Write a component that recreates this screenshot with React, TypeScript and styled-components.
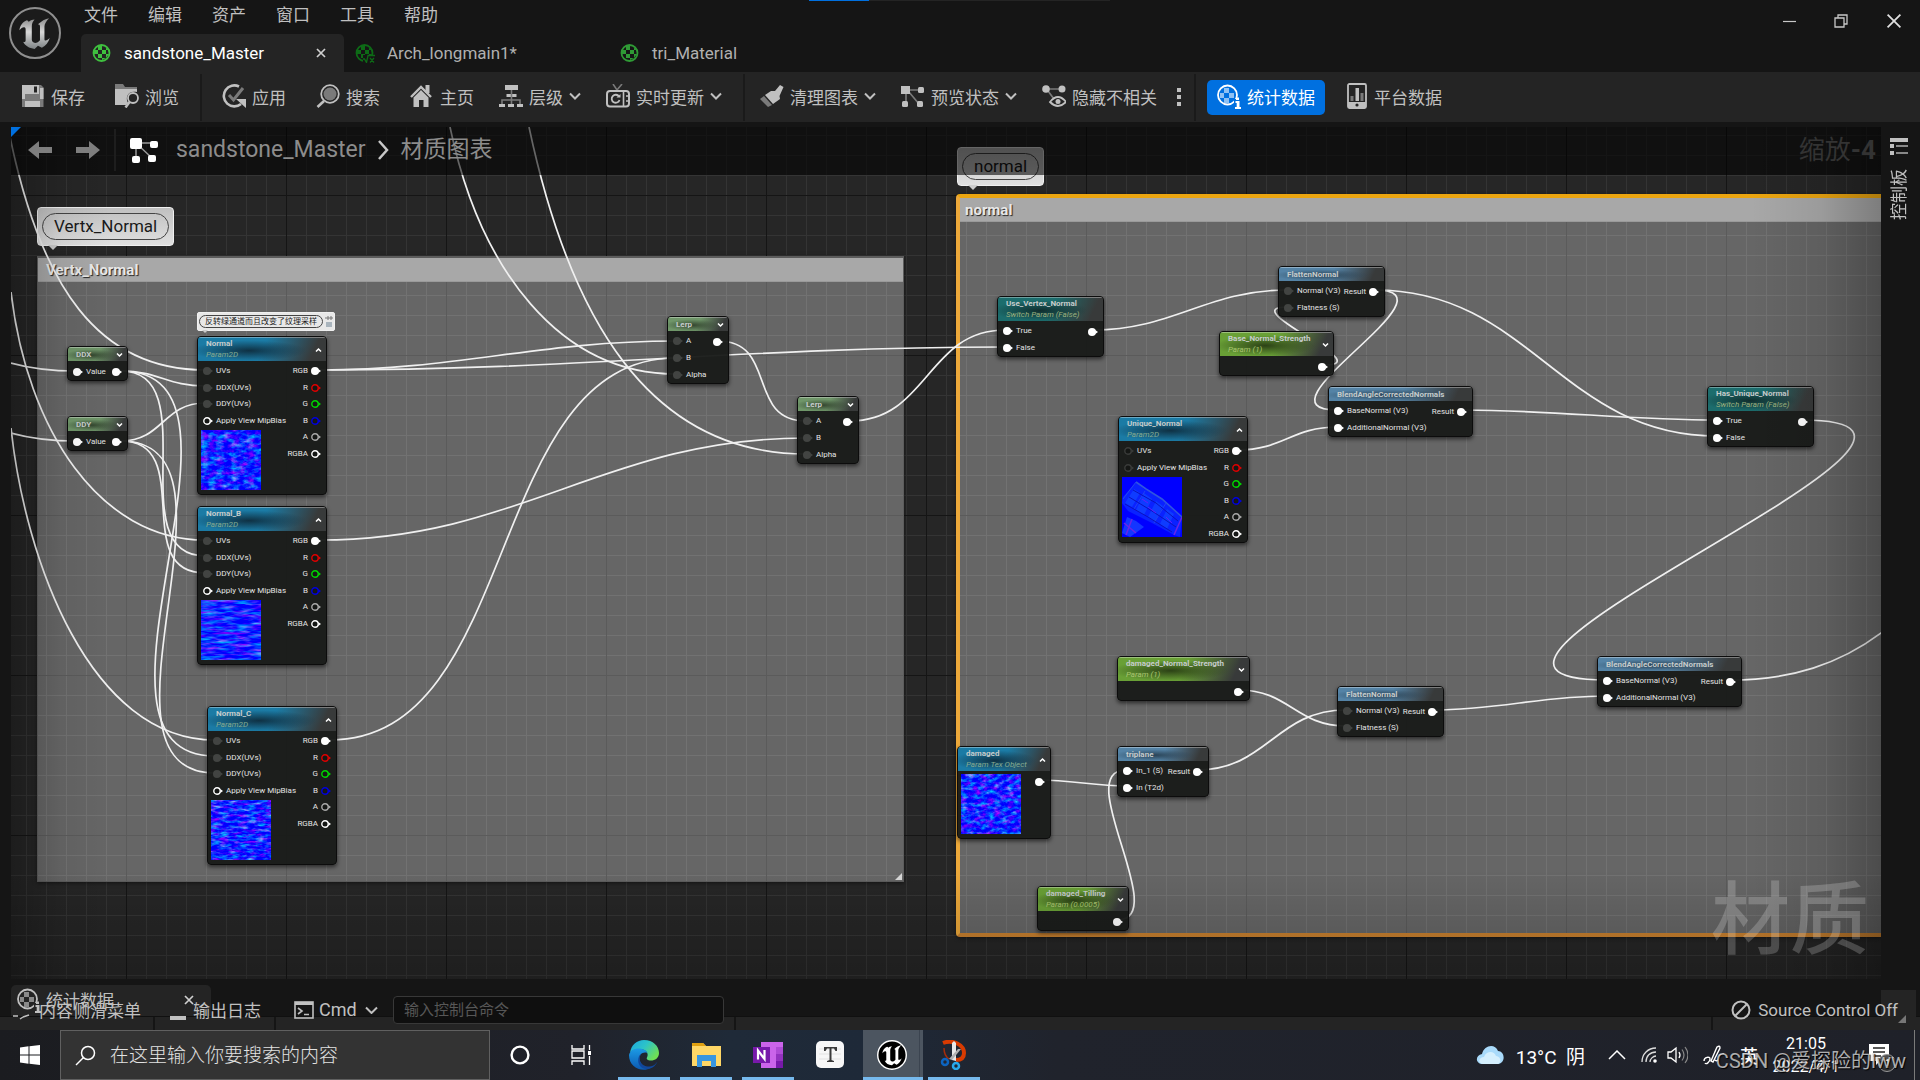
import React from "react";
import styled, { createGlobalStyle, css } from "styled-components";

const Global = createGlobalStyle`
  * { box-sizing: border-box; }
  html, body { margin: 0; background: #151515; }
  body { font-family: Roboto, "Noto Sans CJK SC", sans-serif; color: #c0c0c0; overflow: hidden; }
  button { font: inherit; color: inherit; background: none; border: 0; padding: 0; margin: 0; cursor: pointer; }
  input { font: inherit; }
  svg { display: block; flex: none; }
`;

const Page = styled.div`
  height: 100vh;
  display: flex;
  flex-direction: column;
  background: #151515;
`;

/* ---------- title area ---------- */
const TitleArea = styled.header`
  position: relative;
  height: 72px;
  flex: none;
  display: flex;
`;
const LogoBox = styled.div`
  width: 81px;
  padding: 6px 0 0 9px;
`;
const TitleMain = styled.div`
  flex: 1;
  display: flex;
  flex-direction: column;
  justify-content: space-between;
`;
const MenuBar = styled.nav`
  display: flex;
  gap: 30px;
  padding-left: 3px;
  height: 30px;
  align-items: center;
  font-size: 17px;
  line-height: 24px;
`;
const Tabs = styled.div`
  display: flex;
  height: 38px;
`;
const Tab = styled.div<{ $active?: boolean }>`
  width: ${(p) => (p.$active ? 263 : 265)}px;
  display: flex;
  align-items: center;
  padding: 0 18px 0 11px;
  border-radius: 5px 5px 0 0;
  font-size: 17px;
  background: ${(p) => (p.$active ? "#242424" : "transparent")};
  color: ${(p) => (p.$active ? "#ffffff" : "#b0b0b0")};
`;
const TabLabel = styled.button`
  flex: 1;
  display: flex;
  align-items: center;
  gap: 12px;
  text-align: left;
`;
const ProgressLine = styled.div`
  position: absolute;
  top: 0;
  left: 809px;
  width: 301px;
  height: 1px;
  background: linear-gradient(90deg, #0070e0 60px, #242424 60px);
`;
const WindowButtons = styled.div`
  display: flex;
  align-items: center;
  gap: 38px;
  height: 42px;
  padding-right: 18px;
`;

/* ---------- toolbar ---------- */
const Toolbar = styled.div`
  height: 50px;
  flex: none;
  display: flex;
  align-items: center;
  padding: 0 6px;
  background: #242424;
`;
const Tool = styled.button<{ $tight?: boolean; $on?: boolean }>`
  display: flex;
  align-items: center;
  gap: 6px;
  height: 35px;
  padding: 0 15px 2px ${(p) => (p.$tight ? 10 : 15)}px;
  font-size: 17px;
  white-space: nowrap;
  border-radius: 5px;
  color: #c0c0c0;
  ${(p) =>
    p.$on &&
    css`
      padding: 0 10px 2px;
      margin: 0 6px;
      background: #0070e0;
      color: #ffffff;
    `}
`;
const Divider = styled.div`
  width: 2px;
  height: 47px;
  margin: 0 5px 0 6px;
  background: #1a1a1a;
`;
const Dots = styled.button`
  width: 18px;
  height: 35px;
  margin-left: -2px;
  display: grid;
  place-items: center;
`;

/* ---------- work area ---------- */
const Work = styled.main`
  flex: 1;
  min-height: 0;
  display: flex;
  padding: 5px 0 0 11px;
`;
const SideBar = styled.aside`
  width: 39px;
  flex: none;
  display: flex;
  flex-direction: column;
  align-items: center;
  padding: 11px 3px 0 0;
`;
const SideTab = styled.button`
  display: flex;
  flex-direction: column;
  align-items: center;
  gap: 14px;
`;
const SideText = styled.span`
  writing-mode: vertical-rl;
  transform: rotate(180deg);
  text-orientation: sideways;
  font-size: 17px;
  line-height: 24px;
`;
const Canvas = styled.section`
  flex: 1;
  position: relative;
  overflow: hidden;
  background-color: #262626;
`;
const Grid = styled.div<{ $soft?: boolean }>`
  position: absolute;
  inset: 0;
  pointer-events: none;
  background-image: linear-gradient(90deg, ${(p) => (p.$soft ? "#5b5b5b" : "#151515")} 1px, transparent 1px),
    linear-gradient(${(p) => (p.$soft ? "#5b5b5b" : "#151515")} 1px, transparent 1px),
    linear-gradient(90deg, ${(p) => (p.$soft ? "#727272" : "#343434")} 1px, transparent 1px),
    linear-gradient(${(p) => (p.$soft ? "#727272" : "#343434")} 1px, transparent 1px);
  background-size: 160px 160px, 160px 160px, 20px 20px, 20px 20px;
`;
const Vignette = styled.div`
  position: absolute;
  inset: 0;
  pointer-events: none;
  background: linear-gradient(270deg, rgba(0, 0, 0, 0.26), rgba(0, 0, 0, 0.08) 60px, transparent 130px),
    linear-gradient(90deg, rgba(0, 0, 0, 0.24), rgba(0, 0, 0, 0.05) 50px, transparent 100px),
    linear-gradient(0deg, rgba(0, 0, 0, 0.2), transparent 110px);
`;
const CrumbBar = styled.div`
  position: absolute;
  inset: 0 0 auto 0;
  height: 48px;
  display: flex;
  align-items: center;
  padding: 0 5px 2px 17px;
  background: rgba(0, 0, 0, 0.58);
  color: #8c8c8c;
`;
const CrumbNav = styled.div`
  display: flex;
  gap: 24px;
  padding-right: 14px;
  margin-right: 14px;
  border-right: 2px solid #1e1e1e;
  height: 42px;
  align-items: center;
`;
const Crumb = styled.button<{ $first?: boolean }>`
  font-size: 23px;
  line-height: 34px;
  margin-left: ${(p) => (p.$first ? 18 : 12)}px;
  margin-right: ${(p) => (p.$first ? 11 : 0)}px;
`;
const ZoomText = styled.div`
  margin-left: auto;
  font-size: 26px;
  line-height: 34px;
  color: #333333;
`;
const Watermark = styled.div`
  position: absolute;
  right: 12px;
  bottom: 8px;
  font-size: 79px;
  line-height: 100px;
  font-weight: 500;
  color: rgba(255, 255, 255, 0.2);
`;
const Wires = styled.svg`
  position: absolute;
  inset: 0;
  width: 100%;
  height: 100%;
`;

type Box = { x: number; y: number };
/* the graph is scrolled by this amount inside its view */
const PAN = { x: -11, y: -127 };
const at = css<{ $x: number; $y: number }>`
  position: absolute;
  left: ${(p) => p.$x + PAN.x}px;
  top: ${(p) => p.$y + PAN.y}px;
`;

const Comment = styled.div<{ $x: number; $y: number; $w?: number; $h: number; $sel?: boolean }>`
  ${at}
  ${(p) => (p.$w ? `width: ${p.$w}px;` : "right: 0;")}
  height: ${(p) => p.$h}px;
  overflow: hidden;
  background: #666666;
  box-shadow: 0 1px 4px rgba(0, 0, 0, 0.5);
  ${(p) =>
    p.$sel
      ? css`
          border-style: solid;
          border-width: 4px 0 4px 4px;
          border-color: #eba510 transparent #c8802f #eca83a;
          border-radius: 4px 0 0 4px;
        `
      : css`
          border: 1px solid #5c5c5c;
          border-top-width: 2px;
        `}
`;
const CommentGrid = styled(Grid)<{ $gx: number; $gy: number }>`
  background-position: ${(p) => p.$gx}px ${(p) => p.$gy}px;
`;
const CommentTitle = styled.div<{ $pad: number }>`
  position: relative;
  height: 24px;
  padding-left: ${(p) => p.$pad}px;
  background: #a8a8a8;
  border-bottom: 1px solid #9a9a9a;
  font-size: 15px;
  font-weight: 700;
  line-height: 24px;
  color: #e8e8e8;
  text-shadow: 1px 1px 1px #222222;
`;
const Bubble = styled.div<{ $x: number; $y: number; $small?: boolean }>`
  ${at}
  display: flex;
  align-items: center;
  gap: 2px;
  padding: ${(p) => (p.$small ? "2px 1px" : "5px 4px")};
  border-radius: ${(p) => (p.$small ? 2 : 4)}px;
  border: 1px solid #f0f0f0;
  background: linear-gradient(#c0c0c0, #e0e0e0);
  color: #1a1a1a;
  &::after {
    content: "";
    position: absolute;
    top: 100%;
    left: ${(p) => (p.$small ? 4 : 10)}px;
    border: ${(p) => (p.$small ? 3 : 5)}px solid transparent;
    border-top-color: #cccccc;
  }
  ${(p) => p.$small && "background: #e8e8e8;"}
`;
const BubbleText = styled.span<{ $small?: boolean }>`
  border: 1px solid #444444;
  border-radius: 14px;
  padding: 0 ${(p) => (p.$small ? 5 : 11)}px;
  font-size: ${(p) => (p.$small ? 8 : 17)}px;
  line-height: ${(p) => (p.$small ? 11 : 25)}px;
  white-space: nowrap;
`;

/* ---------- nodes ---------- */
type Tone = "math" | "tex" | "param" | "switch" | "func";
const tones: Record<Tone, { light: string; dark: string; sub: string }> = {
  math: { light: "#6f9669", dark: "#33452f", sub: "#8f9c6c" },
  tex: { light: "#1b7ba5", dark: "#0f3144", sub: "#86ab90" },
  param: { light: "#69a036", dark: "#2c4216", sub: "#a9c670" },
  switch: { light: "#1c6d6d", dark: "#102e2e", sub: "#9bb07e" },
  func: { light: "#5483a6", dark: "#2a4356", sub: "#90a080" },
};
const NodeCard = styled.article<{ $x: number; $y: number; $w: number }>`
  ${at}
  width: ${(p) => p.$w}px;
  border-radius: 4px;
  border: 1px solid #0c0c0c;
  background: rgba(25, 27, 25, 0.96);
  box-shadow: 0 2px 4px rgba(0, 0, 0, 0.6);
  overflow: hidden;
  font-size: 8px;
  line-height: 10px;
  color: #e4e4e4;
`;
const NodeHead = styled.div<{ $tone: Tone; $two: boolean }>`
  height: ${(p) => (p.$two ? 24 : 14)}px;
  display: flex;
  align-items: center;
  justify-content: space-between;
  padding: 0 4px 0 8px;
  border-top: 1px solid rgba(255, 255, 255, 0.35);
  background: radial-gradient(ellipse 45% 45% at 40% 55%, ${(p) => tones[p.$tone].dark}, transparent),
    linear-gradient(115deg, ${(p) => tones[p.$tone].light} 50%, #383a3a 88%);
`;
const NodeTitle = styled.div`
  font-weight: 700;
  color: #c6cccc;
  white-space: nowrap;
`;
const NodeSub = styled.div<{ $tone: Tone }>`
  font-weight: 400;
  font-style: italic;
  line-height: 11px;
  color: ${(p) => tones[p.$tone].sub};
`;
const NodeBody = styled.div`
  display: flex;
  justify-content: space-between;
  padding: 2px 5px 0 5px;
`;
const PinColumn = styled.div<{ $n: number; $out?: boolean }>`
  flex: none;
  white-space: nowrap;
  & > ul {
    list-style: none;
    margin: 0;
    padding: 0;
    display: grid;
    grid-auto-rows: 1fr;
    justify-items: ${(p) => (p.$out ? "end" : "start")};
    height: ${(p) => Math.round(p.$n * 16.5)}px;
  }
`;
const PinRow = styled.li`
  display: flex;
  align-items: center;
  gap: 3px;
`;
const TextureSvg = styled.svg`
  margin: 1px 0 4px -2px;
`;

type PinDef = [label: string, kind: string];
const Pin = ({ kind }: { kind: string }) => {
  const ring = kind.startsWith("o:");
  const color = ring ? kind.slice(2) : kind;
  return (
    <svg width="10" height="8" viewBox="0 0 10 8">
      <circle cx="4" cy="4" r={ring ? 3.2 : 4} fill={ring ? "#151715" : color} stroke={ring ? color : "none"} strokeWidth="1.4" />
      <path d="M7.3 2 L10 4 L7.3 6Z" fill={color} />
    </svg>
  );
};
const Caret = ({ up }: { up?: boolean }) => (
  <svg width="7" height="6" viewBox="0 0 7 6" fill="none" stroke="#fff" strokeWidth="1.5">
    <path d={up ? "M1 4.5 L3.5 2 L6 4.5" : "M1 1.5 L3.5 4 L6 1.5"} />
  </svg>
);

const Texture = ({ kind }: { kind: string }) => (
  <TextureSvg width="60" height="60" viewBox="0 0 60 60">
    <rect width="60" height="60" fill="#0000ff" />
    {kind === "arch" ? (
      <g>
        <path d="M14 5 L22 12 L40 22 L50 32 L60 40 L58 60 L52 58 L30 46 L6 34 L0 26 L1 20Z" fill="#0a22ff" />
        <path d="M12 12 L18 16 L10 30 L3 26Z M22 16 L30 22 L22 38 L14 33Z M34 24 L41 29 L33 45 L26 40Z M45 32 L52 37 L45 52 L38 47Z" fill="#0f3cff" />
        <g stroke="#2f55e0" strokeWidth="1" fill="none">
          <path d="M14 5 L24 12 L40 22 L60 40" strokeWidth="1.6" />
          <path d="M14 5 L1 22 M23 14 L12 32 M44 26 L32 46" stroke="#2244f0" />
          <path d="M11 13 L34 26 L56 44 M7 20 L30 34 L54 50 M3 27 L26 40 L50 55" stroke="#0a12c0" />
          <path d="M26 30 L34 36 M44 40 L50 46 M20 22 L26 26" stroke="#5a20ff" />
        </g>
        <path d="M5 40 L14 44 L22 50 L8 60 L0 56Z" fill="#1436ff" />
        <path d="M2 46 L14 56 M10 42 L4 58 M52 58 L60 40" stroke="#6a25e8" strokeWidth="1.5" />
      </g>
    ) : (
      <rect width="60" height="60" filter={`url(#rock-${kind})`} />
    )}
  </TextureSvg>
);
const rocks: [string, string, number][] = [
  ["a", "0.13 0.22", 3],
  ["b", "0.06 0.34", 8],
  ["c", "0.11 0.34", 15],
  ["d", "0.15 0.24", 22],
];

type NodeDef = Box & { w: number; tone: Tone; title: string; sub?: string; caret?: "up" | "down"; ins: PinDef[]; outs: PinDef[]; tex?: string };
const W = "#ffffff";
const D = "#424442";
const rgba: PinDef[] = [["RGB", W], ["R", "o:#e00000"], ["G", "o:#00d800"], ["B", "o:#0000e0"], ["A", "o:#a8a8a8"], ["RGBA", "o:#ffffff"]];
const texIns: PinDef[] = [["UVs", D], ["DDX(UVs)", D], ["DDY(UVs)", D], ["Apply View MipBias", "o:#ffffff"]];
const lerpIns: PinDef[] = [["A", D], ["B", D], ["Alpha", D]];
const flatIns: PinDef[] = [["Normal (V3)", D], ["Flatness (S)", D]];
const blendIns: PinDef[] = [["BaseNormal (V3)", W], ["AdditionalNormal (V3)", W]];
const boolIns: PinDef[] = [["True", W], ["False", W]];
const one: PinDef[] = [["", W]];
const result: PinDef[] = [["Result", W]];

const nodes: NodeDef[] = [
  { x: 67, y: 346, w: 61, tone: "math", title: "DDX", caret: "down", ins: [["Value", W]], outs: one },
  { x: 67, y: 416, w: 61, tone: "math", title: "DDY", caret: "down", ins: [["Value", W]], outs: one },
  { x: 197, y: 336, w: 130, tone: "tex", title: "Normal", sub: "Param2D", caret: "up", ins: texIns, outs: rgba, tex: "a" },
  { x: 197, y: 506, w: 130, tone: "tex", title: "Normal_B", sub: "Param2D", caret: "up", ins: texIns, outs: rgba, tex: "b" },
  { x: 207, y: 706, w: 130, tone: "tex", title: "Normal_C", sub: "Param2D", caret: "up", ins: texIns, outs: rgba, tex: "c" },
  { x: 667, y: 316, w: 62, tone: "math", title: "Lerp", caret: "down", ins: lerpIns, outs: one },
  { x: 797, y: 396, w: 62, tone: "math", title: "Lerp", caret: "down", ins: lerpIns, outs: one },
  { x: 997, y: 296, w: 107, tone: "switch", title: "Use_Vertex_Normal", sub: "Switch Param (False)", ins: boolIns, outs: one },
  { x: 1278, y: 266, w: 107, tone: "func", title: "FlattenNormal", ins: flatIns, outs: result },
  { x: 1219, y: 331, w: 115, tone: "param", title: "Base_Normal_Strength", sub: "Param (1)", caret: "down", ins: [], outs: one },
  { x: 1328, y: 386, w: 145, tone: "func", title: "BlendAngleCorrectedNormals", ins: blendIns, outs: result },
  { x: 1118, y: 416, w: 130, tone: "tex", title: "Unique_Normal", sub: "Param2D", caret: "up", ins: [["UVs", "o:#3a3c3a"], ["Apply View MipBias", "o:#3a3c3a"]], outs: rgba, tex: "arch" },
  { x: 1117, y: 656, w: 133, tone: "param", title: "damaged_Normal_Strength", sub: "Param (1)", caret: "down", ins: [], outs: one },
  { x: 1337, y: 686, w: 107, tone: "func", title: "FlattenNormal", ins: flatIns, outs: result },
  { x: 957, y: 746, w: 94, tone: "tex", title: "damaged", sub: "Param Tex Object", caret: "up", ins: [], outs: one, tex: "d" },
  { x: 1117, y: 746, w: 92, tone: "func", title: "triplane", ins: [["In_1 (S)", W], ["In (T2d)", W]], outs: result },
  { x: 1037, y: 886, w: 92, tone: "param", title: "damaged_Tilling", sub: "Param (0.0005)", caret: "down", ins: [], outs: one },
  { x: 1707, y: 386, w: 107, tone: "switch", title: "Has_Unique_Normal", sub: "Switch Param (False)", ins: boolIns, outs: one },
  { x: 1597, y: 656, w: 145, tone: "func", title: "BlendAngleCorrectedNormals", ins: blendIns, outs: result },
];

const GraphNode = ({ n }: { n: NodeDef }) => (
  <NodeCard $x={n.x} $y={n.y} $w={n.w}>
    <NodeHead $tone={n.tone} $two={!!n.sub}>
      <div>
        <NodeTitle>{n.title}</NodeTitle>
        {n.sub && <NodeSub $tone={n.tone}>{n.sub}</NodeSub>}
      </div>
      {n.caret && (
        <button aria-label={n.caret === "up" ? "collapse" : "expand"}>
          <Caret up={n.caret === "up"} />
        </button>
      )}
    </NodeHead>
    <NodeBody>
      <PinColumn $n={n.ins.length}>
        {n.ins.length > 0 && (
          <ul>
            {n.ins.map(([label, kind]) => (
              <PinRow key={label}>
                <Pin kind={kind} />
                {label}
              </PinRow>
            ))}
          </ul>
        )}
        {n.tex && <Texture kind={n.tex} />}
      </PinColumn>
      <PinColumn $n={n.outs.length} $out>
        <ul>
          {n.outs.map(([label, kind]) => (
            <PinRow key={label}>
              {label}
              <Pin kind={kind} />
            </PinRow>
          ))}
        </ul>
      </PinColumn>
    </NodeBody>
  </NodeCard>
);

/* x1, y1, x2, y2, tangent length */
const links: [number, number, number, number, number][] = [
  [121, 371, 205, 386, 38],
  [121, 371, 205, 556, 86],
  [121, 371, 215, 756, 158],
  [121, 441, 205, 403, 42],
  [121, 441, 205, 573, 76],
  [121, 441, 215, 773, 139],
  [320, 370, 676, 341, 140],
  [320, 370, 1005, 347, 260],
  [320, 540, 806, 438, 200],
  [330, 740, 676, 358, 192],
  [718, 341, 806, 421, 60],
  [850, 421, 1005, 330, 78],
  [1093, 330, 1287, 290, 80],
  [1375, 290, 1717, 436, 155],
  [1375, 290, 1337, 410, 90],
  [1463, 410, 1717, 420, 90],
  [1238, 450, 1337, 427, 45],
  [1325, 365, 1287, 307, 54],
  [1802, 420, 1606, 680, 240],
  [1433, 710, 1606, 696, 65],
  [1239, 690, 1346, 726, 50],
  [1197, 770, 1346, 710, 70],
  [1040, 780, 1126, 786, 30],
  [1117, 920, 1126, 770, 56],
];
const strays = [
  "M8 127 C40 290 100 370 205 370",
  "M11 292 C27 430 100 540 205 540",
  "M11 428 C25 560 90 740 215 740",
  "M11 363 Q40 371 76 371",
  "M11 433 Q40 441 76 441",
  "M450 127 C480 270 560 374 676 374",
  "M529 127 C570 320 650 454 806 454",
  "M1730 680 C1790 680 1840 665 1885 630",
];

/* ---------- icons ---------- */
const G = "#c0c0c0";
const M = "#7a7a7a";
const Svg = ({ w = 24, h = 24, box, children }: { w?: number; h?: number; box?: string; children: React.ReactNode }) => (
  <svg width={w} height={h} viewBox={box || `0 0 ${w} ${h}`} fill="none" aria-hidden="true">
    {children}
  </svg>
);
const Chevron = () => (
  <Svg w={12} h={8}>
    <path d="M1 1.5 L6 6.5 L11 1.5" stroke={G} strokeWidth="2" />
  </Svg>
);
const U_PATH =
  "M13 10.5 C9.5 12 7 15 6.5 19.5 C8 17.5 9.5 16.5 10.8 16.8 C11.8 17 12 17.8 12 19 L12 28.5 C12 30 11 30.5 9.8 30 C11.5 33.5 15 36 20 36.5 L23 33.5 L26.5 35.5 C30 33.5 32.5 30.5 33.5 26.5 C31.8 28.3 30 29.3 29 28.5 L28.8 28 L28.8 16 C28.8 13.5 30.5 11 33 8.5 C29.5 9 26 11.2 23 14 C24.2 14 24.8 14.6 24.8 16 L24.8 28.5 C23.8 29.8 22 31 20.5 31 C18.5 31 17.5 29.5 17.5 28 L17.5 16 C17.5 13.2 18.5 11.5 20 9.8 C17.8 10 15.5 10.8 14.8 12 C14.5 11.2 13.8 10.7 13 10.5Z";
const UnrealLogo = () => (
  <svg width="52" height="54" viewBox="0 0 52 54" fill="none">
    <defs>
      <linearGradient id="steel" x1="0" y1="0" x2="0" y2="1">
        <stop offset="0" stopColor="#8a8a8a" />
        <stop offset=".45" stopColor="#d8d8d8" />
        <stop offset="1" stopColor="#7d8284" />
      </linearGradient>
    </defs>
    <circle cx="26" cy="27" r="25" stroke="#8f8f8f" strokeWidth="2" fill="#1b1b1b" />
    <path d={U_PATH} fill="url(#steel)" transform="translate(3.2 2.8) scale(1.12 1.1)" />
  </svg>
);
const Ball = ({ color, fx }: { color: string; fx?: boolean }) => (
  <Svg w={20} h={20}>
    <circle cx="9.5" cy="10" r="8" stroke={color} strokeWidth="1.8" />
    <path d="M6 3h4v4H6z M2 7h4v4H2z M10 7h4v4h-4z M6 11h4v4H6z M14 4.5l2.5 2.500H14z M14 11h3l-3 4z M10 15h4l-4 2z" fill={color} />
    {fx && (
      <>
        <path d="M8 12h12v8H8z" fill="#151515" />
        <path d="M8 16l1.5 0 2 3.5 1.5-7h7M15 15l4 4.5M19 15l-4 4.5" stroke={color} strokeWidth="1.3" />
      </>
    )}
  </Svg>
);
const StatsBall = ({ c, blue }: { c: string; blue?: boolean }) => (
  <Svg w={24} h={26}>
    <circle cx="10.5" cy="12" r="9.5" stroke={c} strokeWidth="1.8" />
    <path d="M7 5h5v5H7z M3 10h4v5H3z M12 10h5v5h-5z M7 15h5v5H7z" fill={blue ? "#8fc1f3" : "#8a8a8a"} />
    <path d="M17 16h7v10h-7z" fill={blue ? "#0070e0" : "#242424"} />
    <path d="M18.500 18h4v6h1.500v2h-6v-2h1.700v-4h-1.200z M19 14.500h3V17h-3z" fill={c} />
  </Svg>
);
const I = {
  save: (
    <Svg>
      <path d="M1 1h19l2.500 2.500V23H1z" fill={M} />
      <path d="M4 1h14v9H4z" fill={G} />
      <path d="M13 2.500h3v6h-3z" fill="#242424" />
      <path d="M4 17h15v6H4zM1 1h3v14H1zM19 4h3.500v11H19z" fill={G} />
    </Svg>
  ),
  browse: (
    <Svg>
      <path d="M0 0h8l2 3h12v4H0z" fill={M} />
      <path d="M0 5h22v3c-9-2-12 5-9 11l-2 2H0z" fill={G} />
      <circle cx="18" cy="14" r="5" stroke={G} strokeWidth="1.8" fill="#242424" />
      <path d="M14.500 18 L10.500 23.500" stroke={G} strokeWidth="2.500" />
    </Svg>
  ),
  apply: (
    <Svg>
      <path d="M17 2.500 A10.500 10.500 0 1 0 19 20" stroke={G} strokeWidth="2.600" />
      <path d="M7 11l4.500 5L21 4" stroke={M} strokeWidth="3" />
      <path d="M14 15h10v9z" fill={G} />
    </Svg>
  ),
  search: (
    <Svg>
      <circle cx="14" cy="10" r="8.800" stroke={G} strokeWidth="1.800" />
      <circle cx="14" cy="10" r="6.500" fill={M} />
      <path d="M8 17 L1.500 23" stroke={G} strokeWidth="2.600" />
    </Svg>
  ),
  home: (
    <Svg>
      <path d="M15.500 1h4v8h-4z" fill={G} />
      <path d="M1 13 L11 3 L21 13" stroke={G} strokeWidth="2.400" />
      <path d="M3.500 13.500 L11 6 L18.500 13.500V23h-5v-7h-4.500v7H3.500z" fill={G} />
    </Svg>
  ),
  tree: (
    <Svg>
      <path d="M6 1h13v5H6z M0 20h6v3H0z M9 20h6v3H9z M18 20h6v3h-6z M7.500 10h10v3h-10z" fill={G} />
      <path d="M12.500 6v14M3 20v-4h18v4" stroke={M} strokeWidth="1.600" />
    </Svg>
  ),
  live: (
    <Svg>
      <path d="M7 0l4 6 5-6" stroke={M} strokeWidth="1.600" />
      <rect x="1" y="7" width="22" height="15.500" rx="3" stroke={G} strokeWidth="2" />
      <path d="M17.500 7v15.500M20 12h2M20 17h2" stroke={G} strokeWidth="1.600" />
      <path d="M13 12.500 a4 4 0 1 0 .5 3.500" stroke={G} strokeWidth="1.800" />
      <path d="M10.500 13.500h4v-3.500z" fill={G} />
    </Svg>
  ),
  clean: (
    <Svg>
      <path d="M20 1l3.500 2-4 9 .5 3-7 5-8-9 6-4h4z" fill={G} />
      <path d="M4 12l8 9-4 2L0 15z" fill={M} />
    </Svg>
  ),
  nodes: (
    <Svg>
      <path d="M6 6h12M8 8l10 12M5 8v12" stroke={M} strokeWidth="1.600" />
      <path d="M0 2h9v8H0z" fill={G} />
      <rect x="17" y="3" width="6" height="6" rx="1.500" fill={G} />
      <rect x="16" y="17" width="6" height="6" rx="1.500" fill={G} />
      <rect x="1" y="17" width="6" height="6" rx="1.500" fill={G} />
    </Svg>
  ),
  hide: (
    <Svg>
      <path d="M5 5h14M6 7l6 8" stroke={M} strokeWidth="1.600" />
      <circle cx="4" cy="5" r="3.800" fill={G} />
      <circle cx="20" cy="5" r="3.500" fill={G} />
      <path d="M8 18 Q16 8 24 18 Q16 26 8 18Z" stroke={G} strokeWidth="1.800" fill="#242424" />
      <circle cx="16" cy="17.500" r="2.500" fill={G} />
    </Svg>
  ),
  platform: (
    <Svg w={22} h={26}>
      <rect x="2" y="1" width="18" height="24" rx="1.500" stroke={G} strokeWidth="1.800" />
      <path d="M2 19h18v6H2z" fill={G} />
      <path d="M4.500 13h3v5h-3zM14.500 10h3v8h-3z" fill={M} />
      <path d="M9.500 5h3.500v13H9.500z" fill={G} />
      <circle cx="11" cy="22" r="1.600" fill="#242424" />
    </Svg>
  ),
};

/* ---------- status area ---------- */
const Status = styled.footer`
  position: relative;
  height: 51px;
  flex: none;
  background: linear-gradient(#151515 37px, #101010 37px, #101010 38px, #242424 38px);
`;
const StatsTab = styled.div`
  position: absolute;
  left: 11px;
  top: 6px;
  width: 200px;
  height: 31px;
  padding: 0 17px 2px 6px;
  display: flex;
  align-items: center;
  justify-content: space-between;
  border-radius: 5px 5px 0 0;
  background: #242424;
  font-size: 17px;
`;
const StatsLabel = styled.button`
  display: flex;
  align-items: center;
  gap: 5px;
`;
const StatusRow = styled.div`
  position: relative;
  height: 51px;
  display: flex;
  align-items: center;
  padding: 10px 22px 0 10px;
  font-size: 17px;
`;
const StatusItem = styled.button<{ $w: number; $gap?: number }>`
  width: ${(p) => p.$w}px;
  flex: none;
  display: flex;
  align-items: center;
  gap: ${(p) => p.$gap ?? 6}px;
  white-space: nowrap;
`;
const Cmd = styled.span`
  font-size: 18px;
`;
const Console = styled.input`
  width: 331px;
  height: 28px;
  padding: 0 10px;
  border: 1px solid #383838;
  border-radius: 4px;
  background: #0f0f0f;
  color: #c0c0c0;
  font-size: 15px;
  &::placeholder { color: #575757; }
`;
const SourceControl = styled.button`
  margin-left: auto;
  display: flex;
  align-items: center;
  gap: 7px;
  font-size: 17px;
`;
const Corner = styled.div`
  position: absolute;
  right: 4px;
  top: 11px;
  width: 35px;
  height: 40px;
  padding: 25px 10px 0 0;
  display: flex;
  justify-content: flex-end;
  background: #242424;
`;
const Notch = styled.div<{ $x: number }>`
  position: absolute;
  left: ${(p) => p.$x}px;
  bottom: 0;
  width: 2px;
  height: 13px;
  background: #151515;
`;

/* ---------- taskbar ---------- */
const Taskbar = styled.nav`
  height: 50px;
  flex: none;
  display: flex;
  position: relative;
  background: linear-gradient(90deg, #1b1c20, #20222a 30%, #1f2a38 38%, #1e2938 45%, #20232c 55%, #1f2129);
`;
const Start = styled.button`
  width: 60px;
  display: grid;
  place-items: center;
`;
const SearchBox = styled.label`
  width: 430px;
  margin-right: -1px;
  display: flex;
  align-items: center;
  gap: 12px;
  padding-left: 14px;
  background: #333333;
  border: 1px solid #606060;
`;
const SearchInput = styled.input`
  flex: 1;
  min-width: 0;
  border: 0;
  outline: 0;
  background: none;
  font-size: 19px;
  font-weight: 300;
  color: #fff;
  &::placeholder { color: #e2e2e2; opacity: 1; }
`;
const TaskApp = styled.button<{ $run?: boolean; $on?: boolean }>`
  width: 62px;
  height: 50px;
  display: grid;
  place-items: center;
  position: relative;
  background: ${(p) => (p.$on ? "linear-gradient(90deg, transparent 2px, #4c5560 2px, #4c5560 58px, #2b3340 58px, #4c5560 59px)" : "none")};
  &::after {
    content: "";
    display: ${(p) => (p.$run ? "block" : "none")};
    position: absolute;
    left: ${(p) => (p.$on ? 2 : 5)}px;
    right: ${(p) => (p.$on ? 0 : 5)}px;
    bottom: 0;
    height: 3px;
    background: #76b9ed;
  }
`;
const Tray = styled.div`
  margin-left: auto;
  display: flex;
  align-items: center;
  gap: 15px;
  padding-right: 25px;
  color: #ffffff;
`;
const Weather = styled.button`
  display: flex;
  align-items: center;
  gap: 11px;
  font-size: 19px;
  margin-right: 8px;
`;
const Sound = styled.button`
  margin-left: -5px;
`;
const Lang = styled.button`
  font-size: 18px;
  font-weight: 500;
`;
const Clock = styled.button`
  width: 76px;
  margin: 0 6px 0 -5px;
  font-size: 16px;
  line-height: 23px;
  text-align: center;
`;
const Csdn = styled.div`
  position: absolute;
  right: 14px;
  bottom: 4px;
  font-size: 20px;
  line-height: 30px;
  color: rgba(225, 225, 225, 0.75);
  text-shadow: 1px 1px 1px #000;
  pointer-events: none;
`;
const ShowDesktop = styled.div`
  position: absolute;
  right: 5px;
  top: 0;
  bottom: 0;
  width: 1px;
  background: #7a7a7a;
`;

const CloseX = ({ s = 10, c = "#d0d0d0" }) => (
  <Svg w={s} h={s} box="0 0 10 10">
    <path d="M1 1l8 8M9 1L1 9" stroke={c} strokeWidth={s > 12 ? "1.1" : "1.7"} />
  </Svg>
);

export default function App() {
  return (
    <Page>
      <Global />
      <TitleArea>
        <ProgressLine />
        <LogoBox>
          <UnrealLogo />
        </LogoBox>
        <TitleMain>
          <MenuBar>
            {["文件", "编辑", "资产", "窗口", "工具", "帮助"].map((m) => (
              <button key={m}>{m}</button>
            ))}
          </MenuBar>
          <Tabs>
            <Tab $active>
              <TabLabel><Ball color="#3fc13f" />sandstone_Master</TabLabel>
              <button aria-label="close tab"><CloseX /></button>
            </Tab>
            <Tab>
              <TabLabel><Ball color="#0d6b16" fx />Arch_longmain1*</TabLabel>
            </Tab>
            <Tab>
              <TabLabel><Ball color="#2f9a35" />tri_Material</TabLabel>
            </Tab>
          </Tabs>
        </TitleMain>
        <WindowButtons>
          <button aria-label="minimize"><Svg w={14} h={14}><path d="M1 7.500h13" stroke="#c8c8c8" strokeWidth="1.200" /></Svg></button>
          <button aria-label="restore"><Svg w={14} h={14}><path d="M1 4h9v9H1z M4 4V1h9v9h-3" stroke="#c8c8c8" strokeWidth="1.300" /></Svg></button>
          <button aria-label="close"><CloseX s={16} c="#e0e0e0" /></button>
        </WindowButtons>
      </TitleArea>

      <Toolbar>
        <Tool>{I.save}保存</Tool>
        <Tool>{I.browse}浏览</Tool>
        <Divider />
        <Tool>{I.apply}应用</Tool>
        <Tool>{I.search}搜索</Tool>
        <Tool>{I.home}主页</Tool>
        <Tool $tight>{I.tree}层级<Chevron /></Tool>
        <Tool $tight>{I.live}实时更新<Chevron /></Tool>
        <Divider />
        <Tool $tight>{I.clean}清理图表<Chevron /></Tool>
        <Tool $tight>{I.nodes}预览状态<Chevron /></Tool>
        <Tool $tight>{I.hide}隐藏不相关</Tool>
        <Dots aria-label="more">
          <Svg w={4} h={18}>
            <path d="M0 0h4v4H0zM0 7h4v4H0zM0 14h4v4H0z" fill={G} />
          </Svg>
        </Dots>
        <Divider />
        <Tool $on><StatsBall c="#fff" blue />统计数据</Tool>
        <Tool>{I.platform}平台数据</Tool>
      </Toolbar>

      <Work>
        <Canvas>
          <Grid style={{ backgroundPosition: `${126 + PAN.x}px ${195 + PAN.y}px` }} />
          <Comment $x={37} $y={256} $w={867} $h={626}>
            <CommentGrid $soft $gx={88} $gy={97} />
            <CommentTitle $pad={8}>Vertx_Normal</CommentTitle>
          </Comment>
          <Comment $x={956} $y={194} $h={743} $sel>
            <CommentGrid $soft $gx={126} $gy={157} />
            <CommentTitle $pad={5}>normal</CommentTitle>
          </Comment>
          <Bubble $x={37} $y={207}><BubbleText>Vertx_Normal</BubbleText></Bubble>
          <Bubble $x={957} $y={147}><BubbleText>normal</BubbleText></Bubble>
          <Wires>
            <defs>
              {rocks.map(([id, f, seed]) => (
                <filter key={id} id={`rock-${id}`} x="0" y="0" width="1" height="1" colorInterpolationFilters="sRGB">
                  <feTurbulence type="fractalNoise" baseFrequency={f} numOctaves="3" seed={seed} />
                  <feColorMatrix values="1.5 0 0 0 -0.68  0 1.6 0 0 -0.66  0 0 0 0 1  0 0 0 0 1" />
                </filter>
              ))}
            </defs>
            <g transform={`translate(${PAN.x} ${PAN.y})`} fill="none" stroke="#f0f0f0" strokeWidth="1.700">
              {links.map(([a, b, c, d, t], i) => (
                <path key={i} d={`M${a} ${b} C${a + t} ${b} ${c - t} ${d} ${c} ${d}`} />
              ))}
              {strays.map((d) => (
                <path key={d} d={d} />
              ))}
            </g>
          </Wires>
          <Bubble $x={197} $y={312} $small>
            <BubbleText $small>反转绿通道而且改变了纹理采样</BubbleText>
            <Svg w={8} h={13}>
              <path d="M0 3h8M3 1v4M6 1v4" stroke="#777" />
              <path d="M1 7h6v5H1z" fill="#a9b4bd" />
            </Svg>
          </Bubble>
          {nodes.map((n, i) => (
            <GraphNode key={i} n={n} />
          ))}
          <Wires aria-hidden="true">
            <path d="M891 746 L891 753 L884 753Z" fill="#d8d8d8" />
          </Wires>
          <Vignette />
          <CrumbBar>
            <CrumbNav>
              <button aria-label="back"><Svg w={24} h={20}><path d="M11 1v6h13v6H11v6L0 10z" fill="#7e7e7e" /></Svg></button>
              <button aria-label="forward"><Svg w={24} h={20}><path d="M13 1v6H0v6h13v6l11-9z" fill="#7e7e7e" /></Svg></button>
            </CrumbNav>
            <Svg w={28} h={26}>
              <path d="M6 6h17M7 7l15 14M6 8v14" stroke="#999" strokeWidth="1.500" />
              <rect x="0" y="1" width="12" height="11" rx="2" fill="#fff" />
              <rect x="20" y="4" width="8" height="7" rx="2" fill="#fff" />
              <rect x="18" y="18" width="8" height="7" rx="2" fill="#fff" />
              <rect x="2" y="19" width="8" height="7" rx="2" fill="#fff" />
            </Svg>
            <Crumb $first>sandstone_Master</Crumb>
            <Svg w={12} h={20}><path d="M2 1l8 9-8 9" stroke="#c8c8c8" strokeWidth="2.500" /></Svg>
            <Crumb>材质图表</Crumb>
            <ZoomText>缩放<b>-4</b></ZoomText>
          </CrumbBar>
          <Wires aria-hidden="true"><path d="M0 0h10L0 10z" fill="#0070e0" /></Wires>
          <Watermark>材质</Watermark>
        </Canvas>
        <SideBar>
          <SideTab>
            <Svg w={18} h={17}>
              <path d="M0 0h18v4H0zM0 6h4v4H0zM0 13h4v4H0z" fill={G} />
              <path d="M6 7h12v2H6zM6 14h12v2H6z" fill="#888" />
            </Svg>
            <SideText>控制板</SideText>
          </SideTab>
        </SideBar>
      </Work>

      <Status>
        <Corner>
          <Svg w={8} h={8}><path d="M8 0v8H0z" fill="#777" /></Svg>
        </Corner>
        <StatsTab>
          <StatsLabel><StatsBall c={G} />统计数据</StatsLabel>
          <button aria-label="close panel"><CloseX /></button>
        </StatsTab>
        <Notch $x={153} />
        <Notch $x={274} />
        <Notch $x={734} />
        <Notch $x={1711} />
        <StatusRow>
          <StatusItem $w={160} $gap={8}>
            <Svg w={21} h={22}><path d="M3 17h5M13 18l6-2M10 20l3-2" stroke={G} strokeWidth="1.500" /></Svg>
            内容侧滑菜单
          </StatusItem>
          <StatusItem $w={124} $gap={7}>
            <Svg w={16} h={22}><path d="M0 17h16v4H0z" fill={G} /></Svg>
            输出日志
          </StatusItem>
          <StatusItem $w={99} $gap={5}>
            <Svg w={20} h={18}>
              <rect x="1" y="1" width="18" height="16" stroke={G} strokeWidth="1.600" />
              <path d="M1 1h18v3H1z" fill={G} />
              <path d="M4 7l4 3-4 3M10 13.500h5" stroke={G} strokeWidth="1.600" />
            </Svg>
            <Cmd>Cmd</Cmd>
            <Svg w={20} h={8}><path d="M4 1.500L9.500 7 15 1.500" stroke={G} strokeWidth="2" /></Svg>
          </StatusItem>
          <Console aria-label="控制台命令" placeholder="输入控制台命令" />
          <SourceControl>
            <Svg w={20} h={20}>
              <circle cx="10" cy="10" r="8.500" stroke={G} strokeWidth="2" />
              <path d="M4 16L16 4" stroke={G} strokeWidth="2" />
            </Svg>
            Source Control Off
          </SourceControl>
        </StatusRow>
      </Status>

      <Taskbar>
        <Start aria-label="start">
          <Svg w={20} h={20}><path d="M0 2.500l8.500-1.200v8.200H0zM9.500 1.200L20 0v9.500H9.500zM0 10.500h8.500v8.200L0 17.500zM9.500 10.500H20V20L9.500 18.800z" fill="#fff" /></Svg>
        </Start>
        <SearchBox>
          <Svg w={21} h={21}>
            <circle cx="13" cy="8" r="6.500" stroke="#fff" strokeWidth="1.500" />
            <path d="M8.500 12.500L1 20" stroke="#fff" strokeWidth="1.500" />
          </Svg>
          <SearchInput aria-label="搜索" placeholder="在这里输入你要搜索的内容" />
        </SearchBox>
        <TaskApp aria-label="Cortana"><Svg w={20} h={20}><circle cx="10" cy="10" r="8.400" stroke="#fff" strokeWidth="2.400" /></Svg></TaskApp>
        <TaskApp aria-label="任务视图">
          <Svg w={22} h={20}><path d="M1 0v4h12V0M1 20v-4h12v4M1 6h12v7H1zM18.500 0v5M18.500 11v9" stroke="#fff" strokeWidth="1.300" /><path d="M17 6h3v4h-3z" fill="#fff" /></Svg>
        </TaskApp>
        <TaskApp $run aria-label="Edge">
          <svg width="30" height="30" viewBox="0 0 30 30">
            <defs>
              <linearGradient id="e1" x1="0" y1="0" x2="1" y2=".6"><stop offset="0" stopColor="#1aa5e0" /><stop offset=".5" stopColor="#2cc3c9" /><stop offset="1" stopColor="#6fe054" /></linearGradient>
              <linearGradient id="e2" x1="0" y1="0" x2="0" y2="1"><stop offset="0" stopColor="#1c9be6" /><stop offset="1" stopColor="#0c59b0" /></linearGradient>
            </defs>
            <path d="M1 13 C2 5 8 0 15 0 C24 0 30 6 30 13 C30 18 26 20.500 22 20.500 C18.500 20.500 17 19 18 17.500 C20.500 13 16 9 11 9 C6 9 2 11 1 13Z" fill="url(#e1)" />
            <path d="M0 15 C1 10 6 8 11 8.500 C15 9 18 11 18.500 13 C12 11 9 17 11 21.500 C13 27 19 29 22 28 C12 33 0 27 0 15Z" fill="url(#e2)" />
            <path d="M12 14 C8 20 13 27 21 26.500 C24 26.400 27 24 28.500 21.500 C25 30 15 31 11 26 C8 22 9 16 12 14Z" fill="#11479b" />
          </svg>
        </TaskApp>
        <TaskApp $run aria-label="文件资源管理器">
          <svg width="29" height="24" viewBox="0 0 29 24">
            <path d="M0 0h11l3 3h15v20H0z" fill="#ffd766" />
            <path d="M0 0h11l3 3H0z" fill="#e0a010" />
            <path d="M5 12h19v12h-5v-6h-9v6H5z" fill="#3896e0" />
          </svg>
        </TaskApp>
        <TaskApp $run aria-label="OneNote">
          <svg width="30" height="26" viewBox="0 0 30 26">
            <path d="M8 0h22v26H8z" fill="#ca64ea" />
            <path d="M23 5h7v7h-7z" fill="#ae4bd5" /><path d="M23 12h7v7h-7z" fill="#9332bf" /><path d="M23 19h7v7h-7z" fill="#7719aa" />
            <path d="M0 5h17v16H0z" fill="#7719aa" />
            <path d="M5 17.500V8.500l6.500 8.500V8" stroke="#fff" strokeWidth="2.200" fill="none" />
          </svg>
        </TaskApp>
        <TaskApp aria-label="Typora">
          <svg width="29" height="28" viewBox="0 0 29 28">
            <rect width="28" height="27" rx="5" fill="#f7f7f7" />
            <path d="M3 8h22M3 13h22M3 18h22" stroke="#e3e3e3" />
            <path d="M8 6h13v4h-1.500L18 7.500h-2.500V19l2.500 1v1h-7v-1l2.500-1V7.500H11L9.500 10H8z" fill="#3a3a3a" />
          </svg>
        </TaskApp>
        <TaskApp $run $on aria-label="Unreal Engine">
          <svg width="30" height="30" viewBox="0 0 42 42">
            <circle cx="21" cy="21" r="20" fill="#000" stroke="#fff" strokeWidth="2" />
            <path d={U_PATH} fill="#fff" transform="translate(1 -1)" />
          </svg>
        </TaskApp>
        <TaskApp $run aria-label="截图工具">
          <svg width="28" height="30" viewBox="0 0 28 30" fill="none">
            <path d="M3 3 C13 -1 24 5 24 13 C24 18 21 20 16 20" stroke="#d83b01" strokeWidth="4" />
            <path d="M4 8 C4 14 6 17 9 19" stroke="#a62d0b" strokeWidth="1.500" />
            <path d="M12 3l2-2 2 2v18l-4-1z" fill="#e8e8e8" />
            <path d="M21 9l-9 11-3-1 9-10z" fill="#b0b0b0" />
            <circle cx="5" cy="22" r="3" stroke="#0c64c0" strokeWidth="2.500" />
            <circle cx="16" cy="26" r="3" stroke="#28a8ea" strokeWidth="2.500" />
          </svg>
        </TaskApp>
        <Tray>
          <Weather>
            <svg width="29" height="20" viewBox="0 0 29 20">
              <path d="M7 19 C-1 19 -1 10 6 9 C8 0 19 -2 22 6 C29 6 30 18 22 19Z" fill="#a9dafa" />
              <path d="M7 19 C1 18 3 12 8 12 C10 6 18 5 20 11 C26 12 25 18 22 19Z" fill="#d5effd" />
            </svg>
            13°C&nbsp;&nbsp;阴
          </Weather>
          <button aria-label="显示隐藏的图标"><Svg w={18} h={10}><path d="M1 9l8-8 8 8" stroke="#fff" strokeWidth="1.500" /></Svg></button>
          <Svg w={16} h={16}>
            <path d="M1 15C1 7 7 1 15 1M5 15C5 9 9 5 15 5M9 15c0-3 3-6 6-6" stroke="#ddd" strokeWidth="1.300" />
            <circle cx="14" cy="14" r="1.800" fill="#fff" />
          </Svg>
          <Sound aria-label="音量">
            <Svg w={21} h={18}>
              <path d="M1 6h3l5-4v14l-5-4H1z" stroke="#fff" strokeWidth="1.300" />
              <path d="M12 6q2 3 0 6" stroke="#fff" strokeWidth="1.300" />
              <path d="M15 3.500q4 5.500 0 11M18 1q6 8 0 16" stroke="#888" strokeWidth="1.200" />
            </Svg>
          </Sound>
          <Svg w={22} h={20}>
            <path d="M1 16c0-4 6-5 6-2s-4 6-5 4M8 16L14 2q3-2 3 1L10 17zM12 15q3 3 5-5l4-1" stroke="#fff" strokeWidth="1.400" />
          </Svg>
          <Lang>英</Lang>
          <Clock>21:05<br />2022/4/1</Clock>
          <button aria-label="通知">
            <Svg w={30} h={34}>
              <path d="M4 6h20v17h-9l-4 4v-4H4z" fill="#fff" />
              <path d="M8 10h12M8 14h12M8 18h8" stroke="#222" strokeWidth="1.300" />
              <circle cx="22" cy="25" r="8.500" fill="#333" fillOpacity=".85" stroke="#999" />
              <text x="19" y="30" fontSize="13" fill="#fff">1</text>
            </Svg>
          </button>
        </Tray>
        <ShowDesktop />
        <Csdn>CSDN @爱探险的lww</Csdn>
      </Taskbar>
    </Page>
  );
}
